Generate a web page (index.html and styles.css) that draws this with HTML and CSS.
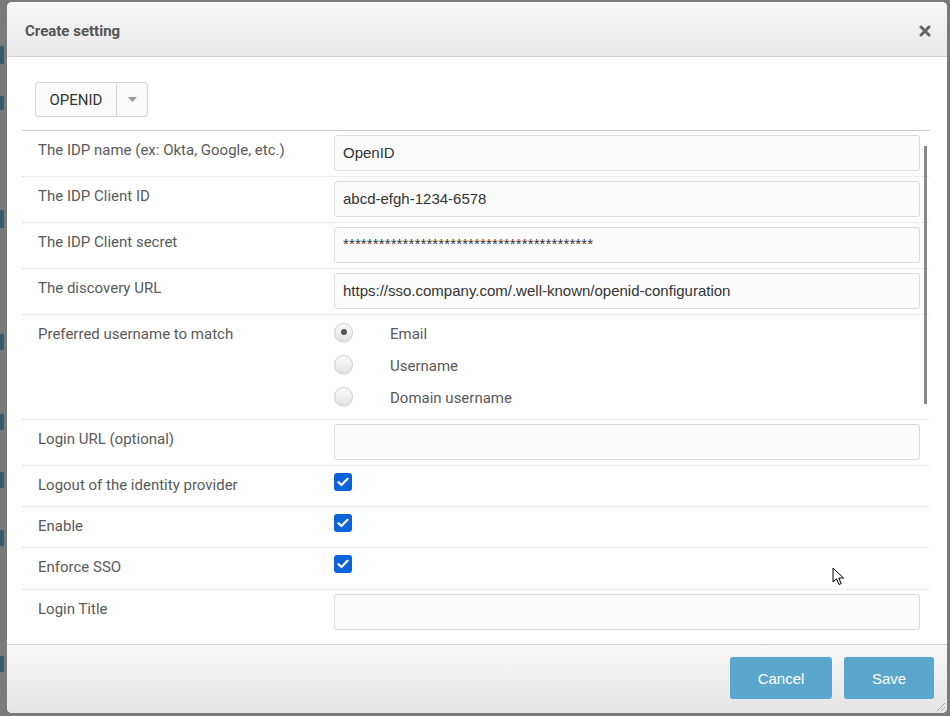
FILE: index.html
```html
<!DOCTYPE html>
<html>
<head>
<meta charset="utf-8">
<link rel="stylesheet" href="styles.css">
</head>
<body>
<div class="backdrop">
  <div class="strips">
    <span class="strip s1"></span><span class="strip s2"></span><span class="strip s3"></span><span class="strip s4"></span>
    <span class="strip s5"></span><span class="strip s6"></span><span class="strip s7"></span><span class="strip s8"></span>
  </div>
  <div class="modal">
    <div class="modal-header">
      <span class="modal-title">Create setting</span>
      <svg class="close" width="12" height="12" viewBox="0 0 12 12"><path d="M2 2 L10 10 M10 2 L2 10" stroke="#666" stroke-width="3" stroke-linecap="round"/></svg>
    </div>
    <div class="modal-body">
      <div class="type-select">
        <span class="type-value">OPENID</span>
        <span class="type-caret"><svg width="9" height="5" viewBox="0 0 9 5"><path d="M0 0 H9 L4.5 5 Z" fill="#999"/></svg></span>
      </div>
      <div class="form-list">
        <div class="row">
          <div class="label">The IDP name (ex: Okta, Google, etc.)</div>
          <div class="field"><div class="input">OpenID</div></div>
        </div>
        <div class="row">
          <div class="label">The IDP Client ID</div>
          <div class="field"><div class="input">abcd-efgh-1234-6578</div></div>
        </div>
        <div class="row">
          <div class="label">The IDP Client secret</div>
          <div class="field"><div class="input secret">******************************************</div></div>
        </div>
        <div class="row">
          <div class="label">The discovery URL</div>
          <div class="field"><div class="input">https://sso.company.com/.well-known/openid-configuration</div></div>
        </div>
        <div class="row row-radio">
          <div class="label">Preferred username to match</div>
          <div class="field">
            <div class="radio-list">
              <div class="radio-item"><span class="radio checked"></span><span class="radio-text">Email</span></div>
              <div class="radio-item"><span class="radio"></span><span class="radio-text">Username</span></div>
              <div class="radio-item"><span class="radio"></span><span class="radio-text">Domain username</span></div>
            </div>
          </div>
        </div>
        <div class="row">
          <div class="label">Login URL (optional)</div>
          <div class="field"><div class="input"></div></div>
        </div>
        <div class="row row-check">
          <div class="label">Logout of the identity provider</div>
          <div class="field"><span class="checkbox"><svg width="12" height="10" viewBox="0 0 12 10"><path d="M1.5 5.2 L4.5 8 L10.5 1.8" stroke="#fff" stroke-width="2.2" fill="none" stroke-linecap="round" stroke-linejoin="round"/></svg></span></div>
        </div>
        <div class="row row-check">
          <div class="label">Enable</div>
          <div class="field"><span class="checkbox"><svg width="12" height="10" viewBox="0 0 12 10"><path d="M1.5 5.2 L4.5 8 L10.5 1.8" stroke="#fff" stroke-width="2.2" fill="none" stroke-linecap="round" stroke-linejoin="round"/></svg></span></div>
        </div>
        <div class="row row-check last-check">
          <div class="label">Enforce SSO</div>
          <div class="field"><span class="checkbox"><svg width="12" height="10" viewBox="0 0 12 10"><path d="M1.5 5.2 L4.5 8 L10.5 1.8" stroke="#fff" stroke-width="2.2" fill="none" stroke-linecap="round" stroke-linejoin="round"/></svg></span></div>
        </div>
        <div class="row no-border">
          <div class="label">Login Title</div>
          <div class="field"><div class="input"></div></div>
        </div>
        <div class="scrollbar"></div>
        <svg class="cursor" width="13" height="20" viewBox="0 0 13 20"><path d="M1 1 L1 15 L4.5 11.8 L7 17.5 L9.2 16.5 L6.8 11 L11.5 11 Z" fill="#fff" stroke="#000" stroke-width="1" stroke-linejoin="round"/></svg>
      </div>
    </div>
    <div class="modal-footer">
      <button class="btn btn-cancel">Cancel</button>
      <button class="btn btn-save">Save</button>
      <svg class="grip" width="12" height="12" viewBox="0 0 12 12"><path d="M11 3 L3 11 M11 7 L7 11" stroke="#aaa" stroke-width="1"/></svg>
    </div>
  </div>
</div>
</body>
</html>
```

FILE: styles.css
```css
html, body {
  margin: 0;
  padding: 0;
}
body {
  width: 950px;
  height: 716px;
  overflow: hidden;
  background: #7a7a7a;
  font-family: Roboto, "Liberation Sans", Arial, sans-serif;
}
.backdrop {
  position: relative;
  width: 950px;
  height: 716px;
  padding: 2px 3px 3px 7px;
  box-sizing: border-box;
}
.strips {
  position: absolute;
  left: 0;
  top: 0;
  width: 6px;
  height: 716px;
}
.strip {
  position: absolute;
  left: 0;
  width: 4px;
  background: #3a5a70;
}
.s1 { top: 46px; height: 18px; }
.s2 { top: 96px; height: 14px; }
.s3 { top: 210px; height: 18px; }
.s4 { top: 334px; height: 16px; }
.s5 { top: 414px; height: 16px; }
.s6 { top: 472px; height: 16px; }
.s7 { top: 530px; height: 16px; }
.s8 { top: 656px; height: 16px; }

.modal {
  position: relative;
  width: 940px;
  height: 711px;
  background: #fff;
  border-radius: 5px;
  overflow: hidden;
  display: flex;
  flex-direction: column;
}
.modal-header {
  height: 55px;
  flex: none;
  display: flex;
  align-items: center;
  justify-content: space-between;
  padding: 3px 16px 0 18px;
  box-sizing: border-box;
  background: linear-gradient(#f6f6f6, #e9e9e9);
  border-bottom: 1px solid #cfcfcf;
}
.modal-title {
  font-weight: bold;
  font-size: 15px;
  color: #555;
}
.close {
  display: block;
}
.modal-body {
  flex: 1;
  padding: 25px 17px 0 15px;
  display: flex;
  flex-direction: column;
  min-height: 0;
}
.type-select {
  align-self: flex-start;
  margin-left: 13px;
  height: 33px;
  display: flex;
  border: 1px solid #d6d6d6;
  border-radius: 3px;
  background: #fbfbfb;
}
.type-value {
  width: 80px;
  border-right: 1px solid #d6d6d6;
  display: flex;
  align-items: center;
  justify-content: center;
  font-size: 15px;
  color: #333;
}
.type-caret {
  width: 30px;
  display: flex;
  align-items: center;
  justify-content: center;
}
.type-caret svg { display: block; }

.form-list {
  position: relative;
  margin-top: 13px;
  border-top: 1px solid #cfcfcf;
  flex: 1;
}
.row {
  display: flex;
  padding: 4px 9px 5px 0;
  border-bottom: 1px dotted #dedede;
}
.row.no-border { border-bottom: none; }
.label {
  width: 296px;
  padding: 5px 0 1px 16px;
  flex: none;
  font-size: 15px;
  line-height: 20px;
  color: #5a5a5a;
}
.field {
  flex: 1;
}
.input {
  height: 34px;
  width: 584px;
  box-sizing: content-box;
  border: 1px solid #dcdcdc;
  border-radius: 3px;
  background: #fcfcfc;
  padding: 0;
  text-indent: 8px;
  font-family: "Liberation Sans", Arial, sans-serif;
  font-size: 15px;
  line-height: 34px;
  color: #333;
  white-space: nowrap;
  overflow: hidden;
}
.input.secret {
  letter-spacing: 0.12px;
  line-height: 32px;
}
.row-radio {
  padding-bottom: 7px;
}
.radio-list {
  margin-top: -3px;
}
.radio-item {
  height: 32px;
  display: flex;
  align-items: center;
}
.radio {
  width: 17px;
  height: 17px;
  border-radius: 50%;
  border: 1px solid #cfcfcf;
  background: linear-gradient(#fafafa, #e4e4e4);
  box-shadow: 0 1px 1px rgba(0,0,0,0.12);
  margin-right: 37px;
  display: flex;
  align-items: center;
  justify-content: center;
  flex: none;
}
.radio.checked::after {
  content: "";
  width: 6px;
  height: 6px;
  border-radius: 50%;
  background: #555;
}
.radio-text {
  font-size: 15px;
  color: #5a5a5a;
  padding-top: 3px;
}
.row-check {
  padding-bottom: 10px;
}
.last-check {
  padding-bottom: 11px;
}
.checkbox {
  margin-top: 3px;
  width: 18px;
  height: 18px;
  border-radius: 3px;
  background: #0b63d9;
  display: flex;
  align-items: center;
  justify-content: center;
}
.checkbox svg { display: block; }
.scrollbar {
  position: absolute;
  left: 902px;
  top: 15px;
  width: 3px;
  height: 258px;
  background: #8a8a8a;
}
.cursor {
  position: absolute;
  left: 810px;
  top: 436px;
}

.modal-footer {
  position: relative;
  height: 69px;
  flex: none;
  border-top: 1px solid #cfcfcf;
  background: linear-gradient(#f7f7f7, #e5e5e5);
  display: flex;
  justify-content: flex-end;
  align-items: flex-start;
  padding: 12px 13px 0 0;
  box-sizing: border-box;
  gap: 12px;
}
.btn {
  height: 42px;
  border: none;
  border-radius: 3px;
  background: #5ba6cd;
  color: #fff;
  font-family: "Liberation Sans", Arial, sans-serif;
  font-size: 15px;
  padding: 0;
}
.btn-cancel { width: 102px; }
.btn-save { width: 90px; }
.grip {
  position: absolute;
  right: 1px;
  bottom: 1px;
}
```
